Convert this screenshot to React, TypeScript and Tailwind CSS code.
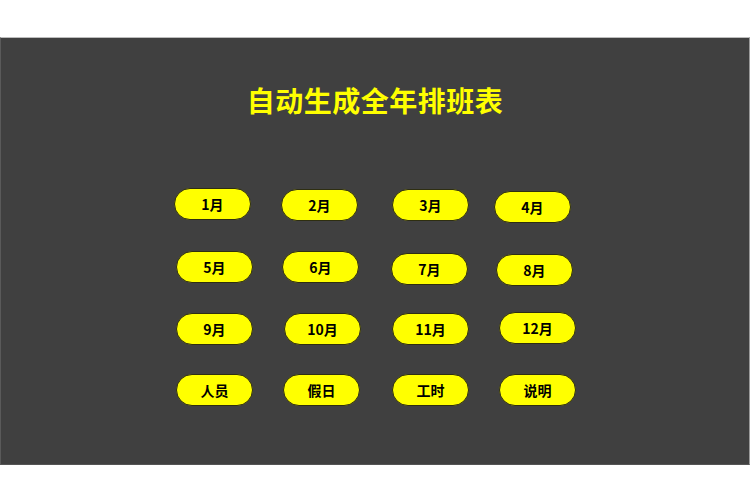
import React from "react";

const btn =
  "w-[77px] h-[32px] rounded-full bg-[#ffff00] border border-[#2e2e10] flex items-center justify-center text-[14px] font-bold text-black leading-none shrink-0";

export default function App() {
  return (
    <div
      className="w-[750px] h-[501px] bg-white flex flex-col"
      style={{ fontFamily: '"Noto Sans CJK SC", "Noto Sans", sans-serif' }}
    >
      <div className="h-[37px] shrink-0" />
      <div className="h-[428px] shrink-0 bg-[#404040] border-t border-t-[#bdbdbd] border-l border-l-[#5a5a5a] border-r border-r-[#9a9a9a] border-b border-b-[#555] flex flex-col">
        <div className="mt-[42px] h-[40px] flex items-center justify-center text-[28px] font-bold text-[#ffff00] leading-none tracking-[0.5px]">
          自动生成全年排班表
        </div>
        <div className="mt-[68px] h-[63px] flex items-start">
          <div className={`${btn} ml-[173px] mt-0`}>1月</div>
          <div className={`${btn} ml-[30px] mt-[1px]`}>2月</div>
          <div className={`${btn} ml-[34px] mt-[1px]`}>3月</div>
          <div className={`${btn} ml-[25px] mt-[3px]`}>4月</div>
        </div>
        <div className="h-[61px] flex items-start">
          <div className={`${btn} ml-[175px] mt-0`}>5月</div>
          <div className={`${btn} ml-[29px] mt-0`}>6月</div>
          <div className={`${btn} ml-[32px] mt-[2px]`}>7月</div>
          <div className={`${btn} ml-[28px] mt-[3px]`}>8月</div>
        </div>
        <div className="h-[62px] flex items-start">
          <div className={`${btn} ml-[175px] mt-[1px]`}>9月</div>
          <div className={`${btn} ml-[31px] mt-[1px]`}>10月</div>
          <div className={`${btn} ml-[31px] mt-[1px]`}>11月</div>
          <div className={`${btn} ml-[30px] mt-0`}>12月</div>
        </div>
        <div className="h-[40px] flex items-start">
          <div className={`${btn} ml-[175px]`}>人员</div>
          <div className={`${btn} ml-[30px]`}>假日</div>
          <div className={`${btn} ml-[32px]`}>工时</div>
          <div className={`${btn} ml-[30px]`}>说明</div>
        </div>
      </div>
      <div className="flex-1" />
    </div>
  );
}
